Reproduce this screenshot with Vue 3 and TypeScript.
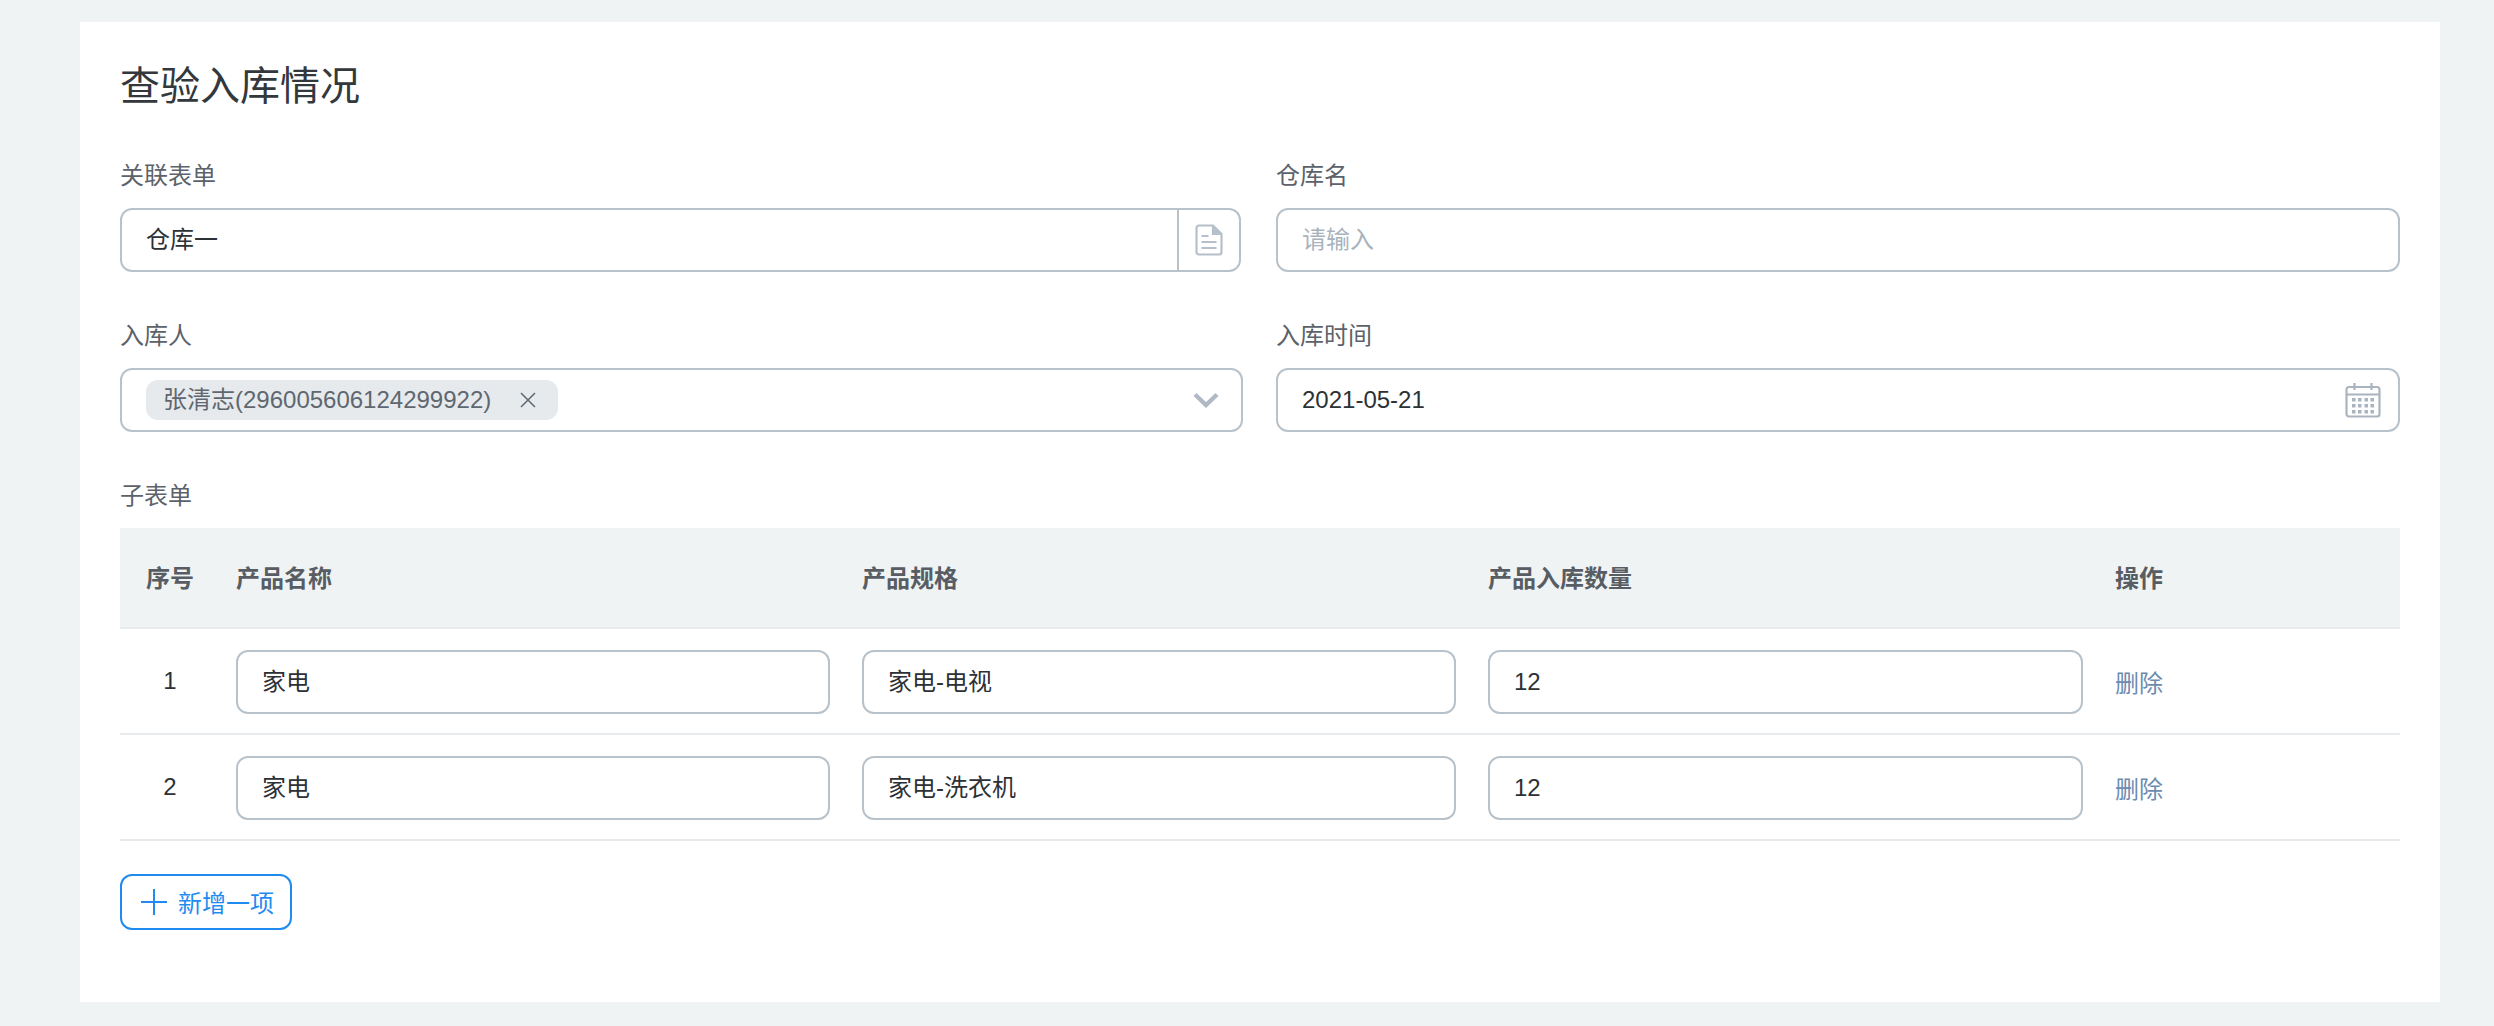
<script setup lang="ts">
interface Row { id: number; name: string; spec: string; qty: string }
const rows: Row[] = [
  { id: 1, name: '家电', spec: '家电-电视', qty: '12' },
  { id: 2, name: '家电', spec: '家电-洗衣机', qty: '12' },
]
const marks: { left: string; top: string }[] = []
for (let r = 0; r < 5; r++) {
  for (let c = 0; c < 12; c++) {
    marks.push({ left: `${38 + c * 200}px`, top: `${30 + r * 200}px` })
  }
}
</script>

<template>
  <div class="page">
    <main class="card">
      <h1 class="title">查验入库情况</h1>
      <div class="grid">
        <div class="field">
          <label class="label">关联表单</label>
          <div class="box">
            <span class="value">仓库一</span>
            <span class="addon">
              <svg width="28" height="32" viewBox="0 0 28 32" fill="none" stroke="#b6c0ca" stroke-width="2.2">
                <path d="M4 1.5h14l8.5 8.5v18a2.5 2.5 0 0 1-2.5 2.5H4A2.5 2.5 0 0 1 1.5 28V4A2.5 2.5 0 0 1 4 1.5z" />
                <path d="M18 1.5V10h8.5" fill="#b6c0ca" />
                <path d="M6.5 12h7M6.500 18h15M6.5 24h15" />
              </svg>
            </span>
          </div>
        </div>
        <div class="field">
          <label class="label">仓库名</label>
          <div class="box"><span class="value placeholder">请输入</span></div>
        </div>
        <div class="field">
          <label class="label">入库人</label>
          <div class="box select">
            <span class="tag">
              <span>张清志(296005606124299922)</span>
              <svg width="18" height="18" viewBox="0 0 18 18" stroke="#5f6770" stroke-width="1.5" fill="none"><path d="M2 2l14 14M16 2L2 16" /></svg>
            </span>
            <svg class="end-icon" width="26" height="16" viewBox="0 0 26 16" fill="none" stroke="#b0bac4" stroke-width="4.4"><path d="M2 2.5l11 10.500L24 2.5" /></svg>
          </div>
        </div>
        <div class="field">
          <label class="label">入库时间</label>
          <div class="box date">
            <span class="value">2021-05-21</span>
            <svg class="end-icon" width="36" height="36" viewBox="0 0 36 36" fill="none" stroke="#aab4bf" stroke-width="2.2">
              <rect x="1.5" y="5" width="33" height="29.5" rx="2.5" />
              <path d="M1.5 12.5h33M9.500 1v7M26.500 1v7" />
              <g fill="#aab4bf" stroke="none">
                <rect x="7" y="16" width="3.500" height="3.500" /><rect x="13" y="16" width="3.500" height="3.500" /><rect x="19.500" y="16" width="3.500" height="3.500" /><rect x="25.500" y="16" width="3.500" height="3.500" />
                <rect x="7" y="22" width="3.500" height="3.500" /><rect x="13" y="22" width="3.500" height="3.500" /><rect x="19.500" y="22" width="3.500" height="3.500" /><rect x="25.500" y="22" width="3.500" height="3.500" />
                <rect x="7" y="28" width="3.500" height="3.500" /><rect x="13" y="28" width="3.500" height="3.500" /><rect x="19.500" y="28" width="3.500" height="3.500" /><rect x="25.500" y="28" width="3.500" height="3.500" />
              </g>
            </svg>
          </div>
        </div>
      </div>

      <label class="label sub">子表单</label>
      <div class="table">
        <div class="tr head">
          <div class="td idx">序号</div>
          <div class="td">产品名称</div>
          <div class="td">产品规格</div>
          <div class="td">产品入库数量</div>
          <div class="td">操作</div>
        </div>
        <div v-for="row in rows" :key="row.id" class="tr">
          <div class="td idx num">{{ row.id }}</div>
          <div class="td"><div class="box cell"><span class="value">{{ row.name }}</span></div></div>
          <div class="td"><div class="box cell"><span class="value">{{ row.spec }}</span></div></div>
          <div class="td"><div class="box cell"><span class="value">{{ row.qty }}</span></div></div>
          <div class="td"><a class="del">删除</a></div>
        </div>
      </div>

      <button class="add" type="button">
        <svg width="26" height="26" viewBox="0 0 26 26" stroke="#1f8bf0" stroke-width="2" fill="none"><path d="M13 0v26M0 13h26" /></svg>
        <span class="add-text">新增一项</span>
      </button>

      <div class="watermark" aria-hidden="true">
        <span v-for="(m, i) in marks" :key="i" class="mark" :style="m">张清志</span>
      </div>
    </main>
  </div>
</template>

<style>
html, body { margin: 0; background: #f0f3f4; }
</style>

<style scoped>
.page {
  box-sizing: border-box;
  height: 1026px;
  padding: 22px 54px 24px 80px;
  background: #f0f3f4;
  font-family: "Liberation Sans", "Noto Sans CJK SC", sans-serif;
  font-size: 24px;
  color: #2c3136;
}
.card {
  position: relative;
  overflow: hidden;
  box-sizing: border-box;
  height: 980px;
  padding: 38px 40px 0;
  background: #fff;
}
.title {
  margin: 0;
  height: 52px;
  font-size: 40px;
  line-height: 52px;
  font-weight: 400;
  color: #33383d;
}
.grid {
  display: grid;
  grid-template-columns: 1123px 1124px;
  column-gap: 33px;
  row-gap: 48px;
  margin-top: 48px;
}
.label {
  display: block;
  height: 32px;
  line-height: 32px;
  color: #5c6269;
}
.field .box { margin-top: 16px; }
.box {
  box-sizing: border-box;
  display: flex;
  align-items: center;
  height: 64px;
  padding: 0 24px;
  border: 2px solid #b8c2ca;
  border-radius: 12px;
  background: #fff;
}
.value { line-height: 32px; }
.placeholder { color: #a9b3bd; }
.addon {
  display: flex;
  align-items: center;
  justify-content: center;
  align-self: stretch;
  width: 60px;
  margin-left: auto;
  margin-right: -24px;
  border-left: 2px solid #b8c2ca;
}
.field:first-child .box { margin-right: 2px; }
.select { padding-left: 24px; padding-right: 22px; }
.tag {
  display: flex;
  align-items: center;
  gap: 28px;
  height: 40px;
  padding: 0 21px 0 17px;
  border-radius: 12px;
  background: #e6eaed;
  color: #5f6770;
  line-height: 40px;
  white-space: nowrap;
}
.end-icon { margin-left: auto; flex: none; }
.date { padding-right: 17px; }
.sub { margin-top: 48px; }
.table { margin-top: 16px; }
.tr {
  display: grid;
  grid-template-columns: 100px 626px 626px 627px 1fr;
  align-items: center;
  height: 106px;
  padding-top: 1px;
  border-bottom: 2px solid #e8ebed;
  box-sizing: border-box;
}
.head {
  height: 101px;
  padding: 0 0 2px;
  background: #f0f3f4;
  font-weight: 700;
  color: #575d63;
}
.td { padding: 0 16px; min-width: 0; }
.idx { text-align: center; padding: 0; }
.num { margin-top: -2px; }
.cell { padding: 0 24px; }
.del { color: #6b8bb0; }
.add {
  box-sizing: border-box;
  display: flex;
  align-items: center;
  gap: 11px;
  width: 172px;
  height: 56px;
  margin-top: 33px;
  padding: 0 0 2px 19px;
  border: 2px solid #1f8bf0;
  border-radius: 12px;
  background: #fff;
  color: #1f8bf0;
  font: inherit;
}
.add svg { margin-top: 2px; }
.watermark {
  position: absolute;
  inset: 0;
  pointer-events: none;
}
.mark {
  position: absolute;
  font-size: 22px;
  line-height: 24px;
  white-space: nowrap;
  color: rgba(90, 120, 170, 0.022);
  transform: rotate(-20deg);
}
</style>
